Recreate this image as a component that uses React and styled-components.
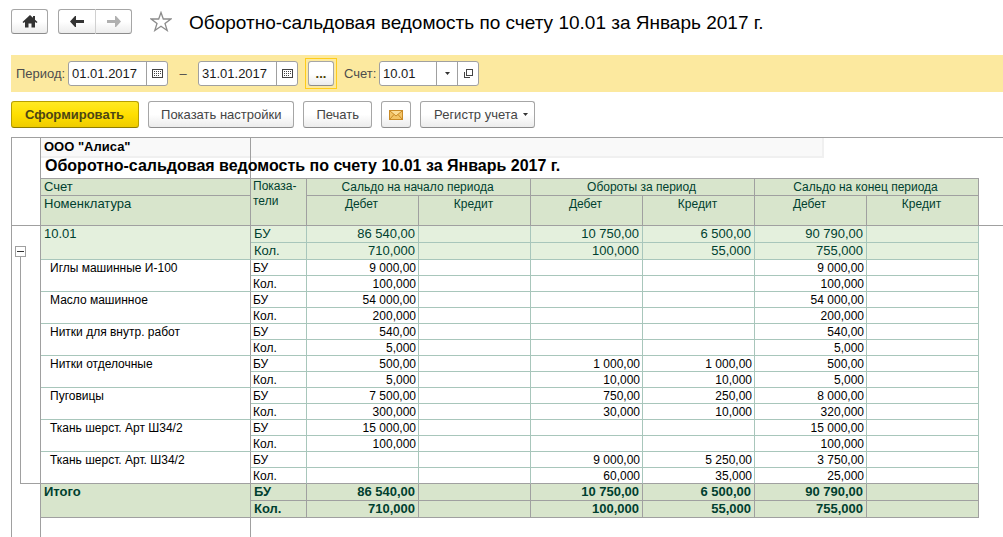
import React, { useState } from "react";
import styled, { createGlobalStyle } from "styled-components";

const GlobalStyle = createGlobalStyle`
  * {
    box-sizing: border-box;
  }
  body {
    margin: 0;
    background: #fff;
    color: #000;
    font-family: "Liberation Sans", Arial, sans-serif;
    font-size: 13px;
  }
  button, input {
    font: inherit;
    margin: 0;
  }
`;

const Page = styled.main`
  display: flex;
  flex-direction: column;
  padding-left: 11px;
  min-height: 100vh;
  overflow: hidden;
`;

const Header = styled.header`
  display: flex;
  align-items: center;
  height: 55px;
  padding-bottom: 12px;
`;

const Button = styled.button`
  display: flex;
  align-items: center;
  justify-content: center;
  height: 27px;
  padding: 0 12px;
  border: 1px solid #a6a6a6;
  border-bottom-color: #8c8c8c;
  border-radius: 3px;
  background: linear-gradient(#fff 50%, #ececec);
  color: #444;
  white-space: nowrap;
  cursor: pointer;
`;

const PrimaryButton = styled(Button)`
  padding: 0 14px 0 13px;
  border-color: #b79f00;
  border-bottom-color: #8f7c00;
  background: linear-gradient(#ffe924, #ffdf00 50%, #efcc00);
  color: #4d4614;
  font-weight: bold;
`;

const MenuButton = styled(Button)`
  gap: 5px;
  padding: 0 6px 0 13px;
`;

const MailButton = styled(Button)`
  width: 30px;
  padding: 0;
`;

const IconButton = styled(Button)`
  width: ${(props) => props.$width}px;
  height: 25px;
  padding: 0;
`;

const NavGroup = styled.div`
  display: flex;
  margin-left: 10px;

  button:first-child {
    border-right: 0;
    border-radius: 3px 0 0 3px;
  }
  button:last-child {
    border-left-color: #d0d0d0;
    border-radius: 0 3px 3px 0;
  }
`;

const StarButton = styled.button`
  display: flex;
  margin-left: 18px;
  padding: 0;
  border: 0;
  background: none;
`;

const PageTitle = styled.h1`
  margin: 0 0 0 17px;
  padding-top: 2px;
  font-size: 19px;
  font-weight: normal;
  white-space: nowrap;
`;

const FilterBar = styled.div`
  display: flex;
  align-items: center;
  height: 37px;
  padding-left: 5px;
  background: #fce99f;
  color: #4d4d4d;
`;

const FieldLabel = styled.label`
  width: ${(props) => props.$width}px;
  white-space: nowrap;
`;

const Field = styled.div`
  display: flex;
  height: 25px;
  width: ${(props) => props.$width}px;
  border: 1px solid #a0a0a0;
  border-radius: 3px;
  background: #fff;
  overflow: hidden;

  input {
    flex: 1;
    min-width: 0;
    padding: 0 0 0 3px;
    border: 0;
    background: none;
    color: #1a1a1a;
    outline: none;
  }
  button {
    display: flex;
    align-items: center;
    justify-content: center;
    width: 21px;
    padding: 0;
    border: 0;
    border-left: 1px solid #a0a0a0;
    background: none;
  }
`;

const Dash = styled.span`
  width: 30px;
  text-align: center;
`;

const FocusFrame = styled.div`
  display: flex;
  margin: 0 7px;
  padding: 2px;
  border: 1px solid #ffcc1a;

  button {
    color: #4d4000;
    font-weight: bold;
  }
`;

const Toolbar = styled.div`
  display: flex;
  gap: 9px;
  padding: 9px 0 9px;
`;

const Report = styled.table`
  width: 100%;
  table-layout: fixed;
  border-collapse: separate;
  border-spacing: 0;
  border-top: 1px solid #a0a0a0;
  border-left: 1px solid #a0a0a0;

  td, th {
    padding: 0;
    vertical-align: top;
    text-align: left;
    font-weight: normal;
  }
`;

const Row = styled.tr`
  height: ${(props) => props.$height}px;
`;

const Gutter = styled.td`
  border-right: 1px solid #a0a0a0;
  border-bottom: ${(props) => (props.$ruled ? "1px solid #a0a0a0" : "0")};
`;

const ToggleGutter = styled(Gutter)`
  background: linear-gradient(#a0a0a0, #a0a0a0) 8px 31px / 1px 3px no-repeat;
`;

const BranchGutter = styled(Gutter)`
  background:
    linear-gradient(#a0a0a0, #a0a0a0) 8px 0 / 1px 100% no-repeat,
    linear-gradient(#a0a0a0, #a0a0a0) 8px 100% / 20px 1px no-repeat;
`;

const Toggle = styled.button`
  display: flex;
  align-items: center;
  justify-content: center;
  width: 11px;
  height: 11px;
  margin: 20px 0 0 3px;
  padding: 0;
  border: 1px solid #a0a0a0;
  background: #fff;
`;

const OrgCell = styled.td`
  border-right: 1px solid #a0a0a0;
`;

const OrgStrip = styled.div`
  width: ${(props) => (props.$width ? `${props.$width}px` : "100%")};
  height: 20px;
  padding-left: 3px;
  border-bottom: 2px solid #f0f0f0;
  border-right: ${(props) => (props.$width ? "2px solid #f0f0f0" : "0")};
  background: #f9f9f9;
  font-weight: bold;
  line-height: 17px;
`;

const TitleCell = styled.td`
  border-right: ${(props) => (props.$last ? "0" : "1px solid #a0a0a0")};
  border-bottom: 1px solid #a0a0a0;
`;

const ReportTitle = styled.h2`
  margin: 0 0 0 4px;
  font-size: 16px;
  line-height: 16px;
  white-space: nowrap;
`;

const HeadCell = styled.th`
  && {
    padding: ${(props) => (props.$center ? "0 2px 0 0" : "0 2px")};
    padding-left: ${(props) => (props.$large ? 3 : props.$center ? 0 : 2)}px;
    text-align: ${(props) => (props.$center ? "center" : "left")};
  }
  border-right: 1px solid #a0a0a0;
  border-bottom: 1px solid #a0a0a0;
  background: #d8e5cc;
  color: #003f2f;
  font-size: ${(props) => (props.$large ? 13 : 12)}px;
  line-height: ${(props) => (props.$tight ? 15 : 16)}px;
`;

const HeadFiller = styled.td`
  border-bottom: 1px solid #a0a0a0;
`;

const looks = {
  account: { line: "#a8c6bb", bg: "#e4f0dd", color: "#003f2f", size: 13, weight: "normal", height: 16, top: 0 },
  item: { line: "#a8c6bb", bg: "#fff", color: "#000", size: 12, weight: "normal", height: 14, top: 1 },
  total: { line: "#a0a0a0", bg: "#d8e5cc", color: "#003f2f", size: 13, weight: "bold", height: 16, top: 0 },
};

const Cell = styled.td`
  && {
    padding: ${(props) => looks[props.$kind].top}px ${(props) => (props.$kind === "item" ? 2 : 3)}px 0;
    text-align: ${(props) => (props.$number ? "right" : "left")};
    font-weight: ${(props) => looks[props.$kind].weight};
  }
  border-right: 1px solid ${(props) => looks[props.$kind].line};
  border-bottom: 1px solid ${(props) => (props.$closing ? "#a0a0a0" : looks[props.$kind].line)};
  background: ${(props) => looks[props.$kind].bg};
  color: ${(props) => looks[props.$kind].color};
  font-size: ${(props) => looks[props.$kind].size}px;
  line-height: ${(props) => looks[props.$kind].height}px;
  white-space: nowrap;
`;

const NameCell = styled(Cell)`
  && {
    padding-left: ${(props) => (props.$kind === "item" ? 9 : 3)}px;
  }
  border-right-color: #a0a0a0;
`;

const TailCell = styled.td`
  border-right: ${(props) => (props.$last ? "0" : "1px solid #a0a0a0")};
`;

const HomeIcon = () => (
  <svg width="16" height="13" viewBox="0 0 16 13">
    <path
      d="M8 0 L0.500 7 L1.500 8 L3 7 V12.500 H6.500 V8.500 H9.500 V12.500 H13 V7 L14.500 8 L15.500 7 L13 4.700 V1 H11 V2.800 Z"
      fill="#333"
    />
  </svg>
);

const ArrowIcon = ({ color, flip }) => (
  <svg width="14" height="11" viewBox="0 0 14 11">
    <path
      d={flip ? "M0 4 H8 V0 L9 0 L14 5.500 L9 11 H8 V7 H0 Z" : "M14 4 H6 V0 L5 0 L0 5.500 L5 11 H6 V7 H14 Z"}
      fill={color}
    />
  </svg>
);

const StarIcon = () => (
  <svg width="22" height="21" viewBox="0 0 22 21">
    <path
      d="M11 1.500 L13.300 8 H20.800 L15 12.500 L17.200 19.500 L11 15.300 L4.800 19.500 L7 12.500 L1.200 8 H8.700 Z"
      fill="#fff"
      stroke="#8c8c8c"
      strokeWidth="1.300"
    />
  </svg>
);

const CalendarIcon = () => (
  <svg width="11" height="9" viewBox="0 0 11 9" shapeRendering="crispEdges">
    <rect x="0.500" y="0.500" width="10" height="8" fill="#fff" stroke="#444" />
    <path d="M2 2.500 H9 M2 4.500 H9 M2 6.500 H7" stroke="#444" strokeDasharray="1 1" />
  </svg>
);

const CaretIcon = () => (
  <svg width="5" height="3" viewBox="0 0 5 3">
    <path d="M0 0 H5 L2.500 3 Z" fill="#333" />
  </svg>
);

const OpenIcon = () => (
  <svg width="9" height="9" viewBox="0 0 9 9" shapeRendering="crispEdges">
    <path d="M2.500 0.500 H8.500 V6.500 H2.500 Z M1 3.500 H0.500 V8.500 H5.500 V8" fill="none" stroke="#444" />
  </svg>
);

const MailIcon = () => (
  <svg width="14" height="10" viewBox="0 0 14 10">
    <rect x="0.500" y="0.500" width="13" height="9" fill="#f3c467" stroke="#c98a26" />
    <path d="M1 1 H13 L7 6 Z" fill="#fbdc95" />
    <path d="M1 1 L7 6 L13 1 M1 9 L5 4.500 M13 9 L9 4.500" fill="none" stroke="#c98a26" />
  </svg>
);

const MinusIcon = () => (
  <svg width="7" height="1" viewBox="0 0 7 1">
    <rect width="7" height="1" fill="#333" />
  </svg>
);

const sections = ["Сальдо на начало периода", "Обороты за период", "Сальдо на конец периода"];

const account = {
  name: "10.01",
  sum: ["86 540,00", "", "10 750,00", "6 500,00", "90 790,00", ""],
  qty: ["710,000", "", "100,000", "55,000", "755,000", ""],
};

const items = [
  {
    name: "Иглы машинные И-100",
    sum: ["9 000,00", "", "", "", "9 000,00", ""],
    qty: ["100,000", "", "", "", "100,000", ""],
  },
  {
    name: "Масло машинное",
    sum: ["54 000,00", "", "", "", "54 000,00", ""],
    qty: ["200,000", "", "", "", "200,000", ""],
  },
  {
    name: "Нитки для внутр. работ",
    sum: ["540,00", "", "", "", "540,00", ""],
    qty: ["5,000", "", "", "", "5,000", ""],
  },
  {
    name: "Нитки отделочные",
    sum: ["500,00", "", "1 000,00", "1 000,00", "500,00", ""],
    qty: ["5,000", "", "10,000", "10,000", "5,000", ""],
  },
  {
    name: "Пуговицы",
    sum: ["7 500,00", "", "750,00", "250,00", "8 000,00", ""],
    qty: ["300,000", "", "30,000", "10,000", "320,000", ""],
  },
  {
    name: "Ткань шерст. Арт Ш34/2",
    sum: ["15 000,00", "", "", "", "15 000,00", ""],
    qty: ["100,000", "", "", "", "100,000", ""],
  },
  {
    name: "Ткань шерст. Арт. Ш34/2",
    sum: ["", "", "9 000,00", "5 250,00", "3 750,00", ""],
    qty: ["", "", "60,000", "35,000", "25,000", ""],
  },
];

const total = { ...account, name: "Итого" };

function ReportRows({ data, kind, gutter, closing }) {
  const height = kind === "item" ? 16 : 17;

  return (
    <>
      <Row $height={height}>
        {gutter}
        <NameCell rowSpan={2} $kind={kind} $closing={closing}>{data.name}</NameCell>
        <Cell $kind={kind}>БУ</Cell>
        {data.sum.map((value, index) => (
          <Cell key={index} $kind={kind} $number>{value}</Cell>
        ))}
      </Row>
      <Row $height={height}>
        <Cell $kind={kind} $closing={closing}>Кол.</Cell>
        {data.qty.map((value, index) => (
          <Cell key={index} $kind={kind} $closing={closing} $number>{value}</Cell>
        ))}
      </Row>
    </>
  );
}

function App() {
  const [from, setFrom] = useState("01.01.2017");
  const [to, setTo] = useState("31.01.2017");
  const [code, setCode] = useState("10.01");
  const [open, setOpen] = useState(true);

  return (
    <Page>
      <GlobalStyle />
      <Header>
        <IconButton $width={37} aria-label="Домой"><HomeIcon /></IconButton>
        <NavGroup>
          <IconButton $width={37} aria-label="Назад"><ArrowIcon color="#333" /></IconButton>
          <IconButton $width={37} aria-label="Вперед"><ArrowIcon color="#b0b0b0" flip /></IconButton>
        </NavGroup>
        <StarButton aria-label="В избранное"><StarIcon /></StarButton>
        <PageTitle>Оборотно-сальдовая ведомость по счету 10.01 за Январь 2017 г.</PageTitle>
      </Header>

      <FilterBar>
        <FieldLabel htmlFor="from" $width={52}>Период:</FieldLabel>
        <Field $width={100}>
          <input id="from" value={from} onChange={(e) => setFrom(e.target.value)} />
          <button aria-label="Выбрать дату начала"><CalendarIcon /></button>
        </Field>
        <Dash>–</Dash>
        <Field $width={100}>
          <input aria-label="Конец периода" value={to} onChange={(e) => setTo(e.target.value)} />
          <button aria-label="Выбрать дату окончания"><CalendarIcon /></button>
        </Field>
        <FocusFrame>
          <IconButton $width={26} aria-label="Выбрать период">...</IconButton>
        </FocusFrame>
        <FieldLabel htmlFor="code" $width={35}>Счет:</FieldLabel>
        <Field $width={100}>
          <input id="code" value={code} onChange={(e) => setCode(e.target.value)} />
          <button aria-label="Список счетов"><CaretIcon /></button>
          <button aria-label="Открыть счет"><OpenIcon /></button>
        </Field>
      </FilterBar>

      <Toolbar>
        <PrimaryButton>Сформировать</PrimaryButton>
        <Button>Показать настройки</Button>
        <Button>Печать</Button>
        <MailButton aria-label="Отправить"><MailIcon /></MailButton>
        <MenuButton>Регистр учета <CaretIcon /></MenuButton>
      </Toolbar>

      <Report>
        <colgroup>
          <col width="29" />
          <col width="210" />
          <col width="56" />
          {[0, 1, 2, 3, 4, 5].map((n) => <col key={n} width="112" />)}
          <col />
        </colgroup>
        <thead>
          <Row $height={20}>
            <Gutter rowSpan={4} $ruled />
            <OrgCell><OrgStrip>ООО "Алиса"</OrgStrip></OrgCell>
            <td colSpan={8}><OrgStrip $width={573} /></td>
          </Row>
          <Row $height={21}>
            <TitleCell>
              <ReportTitle>Оборотно-сальдовая ведомость по счету 10.01 за Январь 2017 г.</ReportTitle>
            </TitleCell>
            <TitleCell colSpan={7} $last />
            <td />
          </Row>
          <Row $height={17}>
            <HeadCell $large>Счет</HeadCell>
            <HeadCell rowSpan={2} $tight>Показа-<br />тели</HeadCell>
            {sections.map((section) => (
              <HeadCell key={section} colSpan={2} $center>{section}</HeadCell>
            ))}
            <HeadFiller rowSpan={2} />
          </Row>
          <Row $height={30}>
            <HeadCell $large>Номенклатура</HeadCell>
            {sections.map((section) => (
              <React.Fragment key={section}>
                <HeadCell $center>Дебет</HeadCell>
                <HeadCell $center>Кредит</HeadCell>
              </React.Fragment>
            ))}
          </Row>
        </thead>
        <tbody>
          <ReportRows
            data={account}
            kind="account"
            gutter={
              <ToggleGutter rowSpan={2}>
                <Toggle aria-label="Свернуть" aria-expanded={open} onClick={() => setOpen(!open)}>
                  <MinusIcon />
                </Toggle>
              </ToggleGutter>
            }
          />
          {open && items.map((item, index) => (
            <ReportRows
              key={item.name}
              data={item}
              kind="item"
              closing={index === items.length - 1}
              gutter={index === 0 && <BranchGutter rowSpan={items.length * 2} />}
            />
          ))}
          <ReportRows data={total} kind="total" gutter={<Gutter rowSpan={2} />} />
          <Row $height={19}>
            <TailCell />
            <TailCell />
            <TailCell colSpan={8} $last />
          </Row>
        </tbody>
      </Report>
    </Page>
  );
}

export default App;
